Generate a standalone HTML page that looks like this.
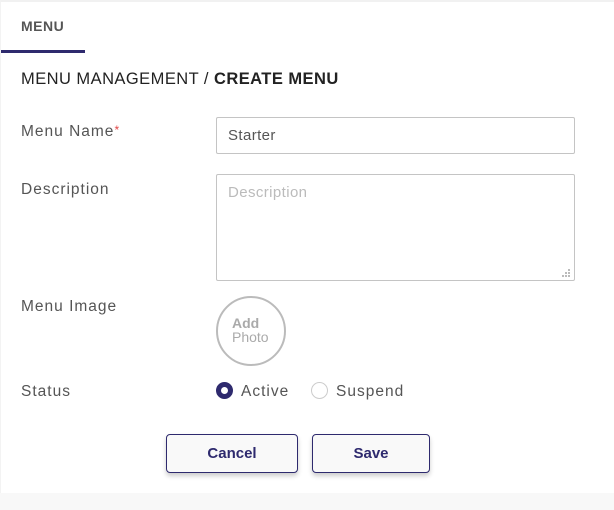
<!DOCTYPE html>
<html><head><style>
*{margin:0;padding:0;box-sizing:border-box}
body{width:614px;height:510px;background:#f8f8f8;font-family:"Liberation Sans",sans-serif;position:relative;overflow:hidden}
.card{position:absolute;left:0;top:0;width:614px;height:493px;background:#fff;border-top:2px solid #f1f1f1;border-left:1px solid #f3f3f3}
.a{position:absolute;white-space:nowrap}
.lbl{font-size:15.5px;color:#555;letter-spacing:1px}
.box{position:absolute;border:1px solid #c4c4c4;border-radius:2px;background:#fff}
.btn{position:absolute;height:39px;border:1px solid #2e2a6e;border-radius:4px;background:#f9f9f9;box-shadow:0 3px 5px rgba(0,0,0,.2);color:#2e2a6e;font-size:15px;font-weight:bold;text-align:center;line-height:37px}
</style></head><body>
<div class="card"></div>
<div class="a" style="left:21px;top:18px;font-size:14px;font-weight:bold;color:#555;letter-spacing:0.5px">MENU</div>
<div class="a" style="left:1px;top:50px;width:84px;height:3px;background:#2e2a6e"></div>
<div class="a" style="left:21px;top:70px;font-size:16.5px;color:#222;letter-spacing:0.45px">MENU MANAGEMENT / <b>CREATE MENU</b></div>
<div class="a lbl" style="left:21px;top:123px">Menu Name<span style="color:#e04646;font-size:12px;vertical-align:top">*</span></div>
<div class="box" style="left:216px;top:117px;width:359px;height:37px"></div>
<div class="a" style="left:228px;top:127px;font-size:15px;color:#555;letter-spacing:0.4px">Starter</div>
<div class="a lbl" style="left:21px;top:181px">Description</div>
<div class="box" style="left:216px;top:174px;width:359px;height:107px"></div>
<div class="a" style="left:228px;top:184px;font-size:15px;color:#bbb;letter-spacing:0.4px">Description</div>
<svg class="a" style="left:562px;top:269px" width="10" height="8"><g fill="#bbb"><rect x="6" y="0" width="2" height="2"/><rect x="3" y="3" width="2" height="2"/><rect x="6" y="3" width="2" height="2"/><rect x="0" y="6" width="2" height="2"/><rect x="3" y="6" width="2" height="2"/><rect x="6" y="6" width="2" height="2"/></g></svg>
<div class="a lbl" style="left:21px;top:298px">Menu Image</div>
<div class="a" style="left:216px;top:296px;width:70px;height:70px;border:2px solid #bbb;border-radius:50%"></div>
<div class="a" style="left:232px;top:316px;font-size:14px;line-height:14px;color:#aaa"><b>Add</b><br>Photo</div>
<div class="a lbl" style="left:21px;top:383px">Status</div>
<div class="a" style="left:216px;top:382px;width:17px;height:17px;border-radius:50%;border:5px solid #2e2a6e;background:#fff"></div>
<div class="a lbl" style="left:241px;top:383px">Active</div>
<div class="a" style="left:311px;top:382px;width:17px;height:17px;border-radius:50%;border:1px solid #ccc;background:#fff"></div>
<div class="a lbl" style="left:336px;top:383px">Suspend</div>
<div class="btn" style="left:166px;top:434px;width:132px">Cancel</div>
<div class="btn" style="left:312px;top:434px;width:118px">Save</div>
</body></html>
